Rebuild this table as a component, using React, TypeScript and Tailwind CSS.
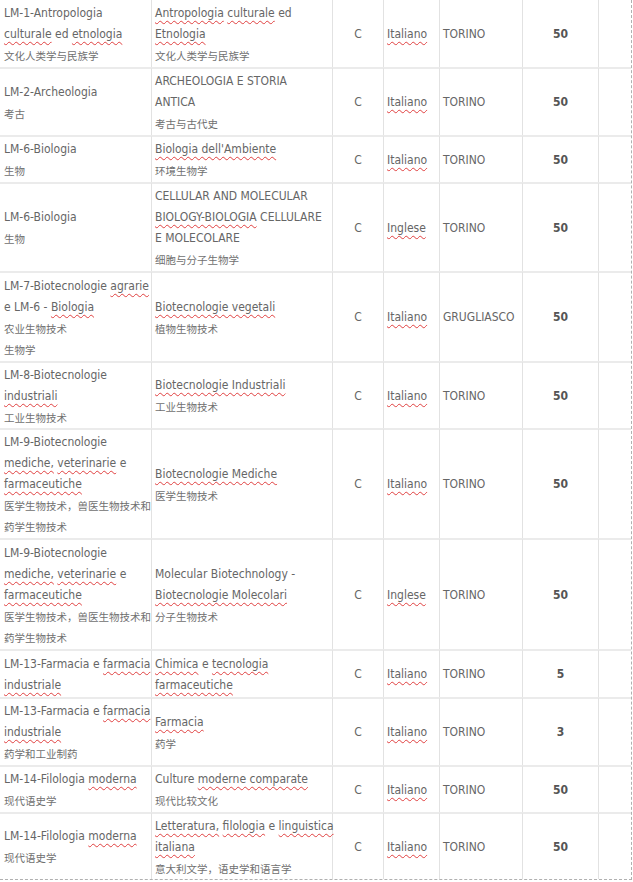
import React from "react";

type Line = React.ReactNode;

const S = ({ children }: { children: React.ReactNode }) => (
  <span className="underline decoration-wavy decoration-[#e04040] decoration-1 underline-offset-[3px]">
    {children}
  </span>
);

const Z = ({ children }: { children: React.ReactNode }) => (
  <span className="text-[10.5px] text-[#707070]" style={{ fontFamily: '"Noto Sans CJK SC", sans-serif' }}>
    {children}
  </span>
);

type Row = {
  h: string;
  c1: Line[];
  c2: Line[];
  lang: React.ReactNode;
  city: string;
  num: string;
};

const LM9: Line[] = [
  "LM-9-Biotecnologie",
  <>
    <S>mediche,</S> <S>veterinarie</S> e
  </>,
  <S>farmaceutiche</S>,
  <Z>医学生物技术，兽医生物技术和</Z>,
  <Z>药学生物技术</Z>,
];

const LM13: Line[] = [
  <>
    LM-13-Farmacia e <S>farmacia</S>
  </>,
  <S>industriale</S>,
];

const LM14: Line[] = [
  <>
    LM-14-Filologia <S>moderna</S>
  </>,
  <Z>现代语史学</Z>,
];

const IT = <S>Italiano</S>;
const EN = <S>Inglese</S>;

const rows: Row[] = [
  {
    h: "h-[67px]",
    c1: [
      "LM-1-Antropologia",
      <>
        <S>culturale</S> ed <S>etnologia</S>
      </>,
      <Z>文化人类学与民族学</Z>,
    ],
    c2: [
      <>
        <S>Antropologia</S> <S>culturale</S> ed
      </>,
      <S>Etnologia</S>,
      <Z>文化人类学与民族学</Z>,
    ],
    lang: IT,
    city: "TORINO",
    num: "50",
  },
  {
    h: "h-[68px]",
    c1: ["LM-2-Archeologia", <Z>考古</Z>],
    c2: ["ARCHEOLOGIA E STORIA", "ANTICA", <Z>考古与古代史</Z>],
    lang: IT,
    city: "TORINO",
    num: "50",
  },
  {
    h: "h-[47px]",
    c1: ["LM-6-Biologia", <Z>生物</Z>],
    c2: [<S>Biologia dell'Ambiente</S>, <Z>环境生物学</Z>],
    lang: IT,
    city: "TORINO",
    num: "50",
  },
  {
    h: "h-[89px]",
    c1: ["LM-6-Biologia", <Z>生物</Z>],
    c2: [
      "CELLULAR AND MOLECULAR",
      <>
        <S>BIOLOGY-BIOLOGIA</S> CELLULARE
      </>,
      "E MOLECOLARE",
      <Z>细胞与分子生物学</Z>,
    ],
    lang: EN,
    city: "TORINO",
    num: "50",
  },
  {
    h: "h-[90px]",
    c1: [
      <>
        LM-7-Biotecnologie <S>agrarie</S>
      </>,
      <>
        e LM-6 - <S>Biologia</S>
      </>,
      <Z>农业生物技术</Z>,
      <Z>生物学</Z>,
    ],
    c2: [<S>Biotecnologie vegetali</S>, <Z>植物生物技术</Z>],
    lang: IT,
    city: "GRUGLIASCO",
    num: "50",
  },
  {
    h: "h-[67px]",
    c1: ["LM-8-Biotecnologie", <S>industriali</S>, <Z>工业生物技术</Z>],
    c2: [<S>Biotecnologie Industriali</S>, <Z>工业生物技术</Z>],
    lang: IT,
    city: "TORINO",
    num: "50",
  },
  {
    h: "h-[110px]",
    c1: LM9,
    c2: [<S>Biotecnologie Mediche</S>, <Z>医学生物技术</Z>],
    lang: IT,
    city: "TORINO",
    num: "50",
  },
  {
    h: "h-[111px]",
    c1: LM9,
    c2: ["Molecular Biotechnology -", <S>Biotecnologie Molecolari</S>, <Z>分子生物技术</Z>],
    lang: EN,
    city: "TORINO",
    num: "50",
  },
  {
    h: "h-[48px]",
    c1: LM13,
    c2: [
      <>
        <S>Chimica</S> e <S>tecnologia</S>
      </>,
      <S>farmaceutiche</S>,
    ],
    lang: IT,
    city: "TORINO",
    num: "5",
  },
  {
    h: "h-[68px]",
    c1: [...LM13, <Z>药学和工业制药</Z>],
    c2: [<S>Farmacia</S>, <Z>药学</Z>],
    lang: IT,
    city: "TORINO",
    num: "3",
  },
  {
    h: "h-[47px]",
    c1: LM14,
    c2: [
      <>
        Culture <S>moderne comparate</S>
      </>,
      <Z>现代比较文化</Z>,
    ],
    lang: IT,
    city: "TORINO",
    num: "50",
  },
  {
    h: "h-[67px]",
    c1: LM14,
    c2: [
      <>
        <S>Letteratura,</S> <S>filologia</S> e <S>linguistica</S>
      </>,
      <S>italiana</S>,
      <Z>意大利文学，语史学和语言学</Z>,
    ],
    lang: IT,
    city: "TORINO",
    num: "50",
  },
];

const Lines = ({ lines }: { lines: Line[] }) => (
  <>
    {lines.map((l, i) => (
      <div key={i} className="h-[21px] leading-[21px] whitespace-nowrap">
        {l}
      </div>
    ))}
  </>
);

export default function App() {
  return (
    <div
      className="w-[633px] h-[882px] overflow-hidden bg-white text-[12px] text-[#666]"
      style={{ fontFamily: '"DejaVu Sans Condensed", "DejaVu Sans", "Noto Sans CJK SC", sans-serif', fontStretch: "condensed" }}
    >
      <table className="table-fixed border-separate border-spacing-0 w-[632px] border-r border-b border-dashed border-[#b0b0b0]">
        <colgroup>
          <col className="w-[151px]" />
          <col className="w-[181px]" />
          <col className="w-[51px]" />
          <col className="w-[56px]" />
          <col className="w-[83px]" />
          <col className="w-[76px]" />
          <col className="w-[33px]" />
        </colgroup>
        <tbody>
          {rows.map((r, i) => {
            const bt = i === 0 ? "" : "border-t-2 border-t-[#ebebeb]";
            const cell = `${bt} pt-[1px] pb-0 align-middle`;
            const vl = "border-l border-l-[#e2e2e2]";
            return (
              <tr key={i} className={r.h}>
                <td className={`${cell} pl-[4px] pr-[2px]`}>
                  <Lines lines={r.c1} />
                </td>
                <td className={`${cell} ${vl} pl-[3px] pr-[2px]`}>
                  <Lines lines={r.c2} />
                </td>
                <td className={`${cell} ${vl} text-center leading-[21px]`}>C</td>
                <td className={`${cell} ${vl} pl-[3px] leading-[21px]`}>{r.lang}</td>
                <td className={`${cell} ${vl} pl-[3px] leading-[21px]`}>{r.city}</td>
                <td className={`${cell} ${vl} text-center font-bold text-[#555] leading-[21px]`}>{r.num}</td>
                <td className={`${cell} ${vl}`}></td>
              </tr>
            );
          })}
        </tbody>
      </table>
    </div>
  );
}
